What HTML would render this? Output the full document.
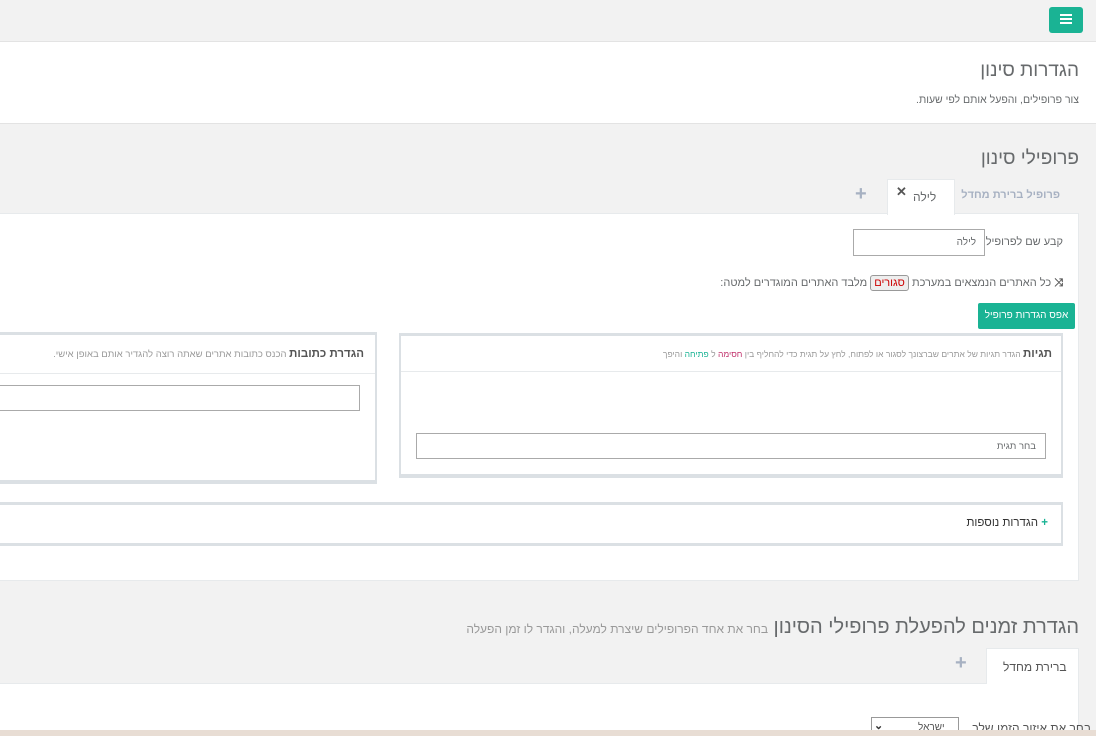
<!DOCTYPE html>
<html><head><meta charset="utf-8"><style>
*{box-sizing:border-box;margin:0;padding:0}
html{width:1096px;height:736px;overflow:hidden}
body{width:1096px;height:736px;overflow:hidden;background:#f2f2f2;font-family:"Liberation Sans","Noto Sans CJK SC",sans-serif;color:#555;position:relative;direction:rtl}
.a{position:absolute;white-space:nowrap}
.box{position:absolute;background:#fff}
</style></head><body>
<div class="a" style="left:0;top:41px;width:1096px;height:1px;background:#e3e3e3"></div>
<div class="a" style="left:1049px;top:7px;width:34px;height:26px;background:#1ab394;border-radius:3px"></div>
<div class="a" style="left:1060px;top:14px;width:12px;height:2px;background:#fff;box-shadow:0 4px #fff,0 8px #fff"></div>
<div class="box" style="left:0;top:42px;width:1096px;height:82px;border-bottom:1px solid #e3e3e3"></div>
<div class="a" style="right:17px;top:60px;font-size:19px;color:#676a6c">הגדרות סינון</div>
<div class="a" style="right:17px;top:94px;font-size:10.5px;color:#676a6c">צור פרופילים, והפעל אותם לפי שעות.</div>
<div class="a" style="right:17px;top:148px;font-size:19px;color:#676a6c">פרופילי סינון</div>
<div class="a" style="right:36px;top:189px;font-size:11px;color:#a7b1c2;font-weight:bold">פרופיל ברירת מחדל</div>
<div class="box" style="left:887px;top:179px;width:68px;height:36px;border:1px solid #e7eaec;border-bottom:none;z-index:2"></div>
<div class="a" style="left:913px;top:190px;font-size:12px;color:#676a6c;z-index:3">לילה</div>
<div class="a" style="left:896px;top:184px;font-size:13px;color:#555;font-weight:bold;z-index:3">✕</div>
<div class="a" style="left:855px;top:183px;font-size:20px;color:#a7b1c2;font-weight:bold">+</div>
<div class="box" style="left:-1px;top:213px;width:1080px;height:368px;border:1px solid #e7eaec"></div>
<div class="a" style="right:33px;top:236px;font-size:11px;color:#676a6c">קבע שם לפרופיל</div>
<div class="box" style="left:853px;top:229px;width:132px;height:27px;border:1px solid #aaa"></div>
<div class="a" style="right:120px;top:237px;font-size:10px;color:#676a6c">לילה</div>
<div class="a" style="right:33px;top:275px;font-size:11px;color:#676a6c"><b style="color:#555">⤨</b> כל האתרים הנמצאים במערכת <span style="display:inline-block;border:1px solid #999;background:#eee;border-radius:3px;padding:1px 3px;color:#c00">סגורים</span> מלבד האתרים המוגדרים למטה:</div>
<div class="a" style="left:978px;top:303px;width:97px;height:26px;background:#1ab394;border-radius:2px;color:#fff;font-size:10px;text-align:center;line-height:26px">אפס הגדרות פרופיל</div>
<div class="box" style="left:399px;top:333px;width:664px;height:145px;border:3px solid #dbe0e4;border-width:3px 2px 4px 2px"></div>
<div class="a" style="left:401px;top:371px;width:660px;height:1px;background:#e7eaec"></div>
<div class="a" style="right:44px;top:348px;font-size:8.5px;color:#999"><b style="font-size:11.5px;color:#555">תגיות</b> הגדר תגיות של אתרים שברצונך לסגור או לפתוח, לחץ על תגית כדי להחליף בין <span style="color:#c0306a">חסימה</span> ל <span style="color:#1ab394">פתיחה</span> והיפך</div>
<div class="box" style="left:416px;top:433px;width:630px;height:26px;border:1px solid #aaa"></div>
<div class="a" style="right:60px;top:441px;font-size:9.5px;color:#676a6c">בחר תגית</div>
<div class="box" style="left:-5px;top:332px;width:382px;height:152px;border:3px solid #dbe0e4;border-width:3px 2px 4px 2px"></div>
<div class="a" style="left:0;top:373px;width:375px;height:1px;background:#e7eaec"></div>
<div class="a" style="right:732px;top:348px;font-size:9.5px;color:#999"><b style="font-size:11.5px;color:#555">הגדרת כתובות</b> הכנס כתובות אתרים שאתה רוצה להגדיר אותם באופן אישי.</div>
<div class="box" style="left:-5px;top:385px;width:365px;height:26px;border:1px solid #aaa"></div>
<div class="box" style="left:-5px;top:502px;width:1068px;height:44px;border:3px solid #dbe0e4;border-width:3px 2px 3px 2px"></div>
<div class="a" style="right:48px;top:517px;font-size:11.5px;color:#333"><span style="color:#1ab394;font-weight:bold">+</span> הגדרות נוספות</div>
<div class="a" style="right:17px;top:616px;font-size:20px;color:#676a6c">הגדרת זמנים להפעלת פרופילי הסינון <span style="font-size:12px;color:#999">בחר את אחד הפרופילים שיצרת למעלה, והגדר לו זמן הפעלה</span></div>
<div class="box" style="left:986px;top:648px;width:93px;height:36px;border:1px solid #e7eaec;border-bottom:none;z-index:2"></div>
<div class="a" style="left:1003px;top:660px;font-size:12px;color:#555;z-index:3">ברירת מחדל</div>
<div class="a" style="left:955px;top:652px;font-size:20px;color:#a7b1c2;font-weight:bold">+</div>
<div class="box" style="left:-1px;top:683px;width:1080px;height:53px;border:1px solid #e7eaec;border-bottom:none"></div>
<div class="a" style="right:5px;top:721px;font-size:12px;color:#555">בחר את איזור הזמן שלך</div>
<div class="box" style="left:871px;top:717px;width:88px;height:19px;border:1px solid #999;border-bottom:none"></div>
<div class="a" style="left:918px;top:722px;font-size:10px;color:#555">ישראל</div>
<div class="a" style="left:874px;top:719px;font-size:11px;color:#333;font-weight:bold">⌄</div>
<div class="a" style="left:0;top:730px;width:1096px;height:6px;background:#e8ddd4"></div>
</body></html>
